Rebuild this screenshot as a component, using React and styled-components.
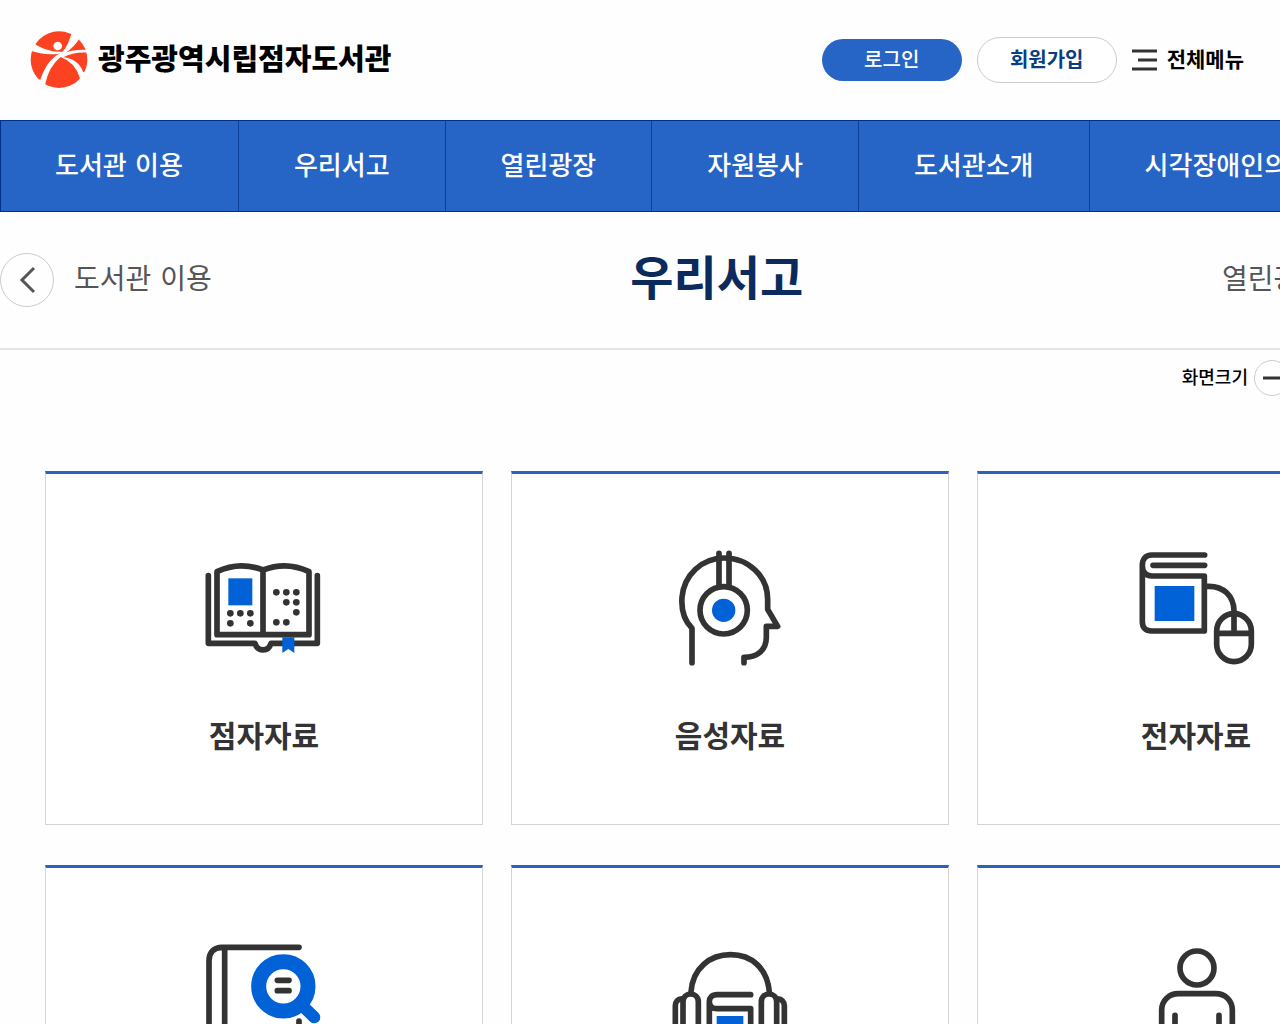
import React from "react";
import styled, { createGlobalStyle } from "styled-components";

const ink = "#333333";
const blue = "#2665c6";
const accent = "#0062d6";

const Global = createGlobalStyle`
  * { box-sizing: border-box; }
  html { overflow-x: hidden; }
  body {
    margin: 0;
    background: #fefefe;
    color: #000;
    font-family: "DejaVu Sans", "Noto Sans CJK KR", sans-serif;
  }
  a { color: inherit; text-decoration: none; }
  button { font: inherit; padding: 0; cursor: pointer; }
  h1, ul { margin: 0; padding: 0; list-style: none; }
`;

const Header = styled.header`
  display: flex;
  justify-content: space-between;
  align-items: center;
  height: 120px;
  padding: 0 36px 0 30px;
`;

const Logo = styled.a`
  display: flex;
  align-items: center;
  gap: 10px;
  font-size: 29px;
  line-height: 40px;
  font-weight: 900;
`;

const Tools = styled.div`
  display: flex;
  align-items: center;
  gap: 15px;
`;

const Pill = styled.a`
  display: flex;
  align-items: center;
  justify-content: center;
  width: 140px;
  height: ${(p) => (p.$filled ? 42 : 46)}px;
  border: ${(p) => (p.$filled ? "0" : "1px solid #cccccc")};
  border-radius: 23px;
  background: ${(p) => (p.$filled ? blue : "#fff")};
  color: ${(p) => (p.$filled ? "#fff" : "#083f82")};
  font-size: 20px;
  line-height: 28px;
  font-weight: ${(p) => (p.$filled ? 500 : 700)};
`;

const MenuButton = styled.button`
  display: flex;
  align-items: center;
  gap: 10px;
  border: 0;
  background: none;
  font-size: 21px;
  line-height: 28px;
  font-weight: 700;
`;

const Page = styled.div`
  min-width: 1434px;
`;

const Nav = styled.nav`
  background: ${blue};
  border: solid #003088;
  border-width: 1px 0;
  box-shadow: inset 1px 0 #003088;

  ul { display: flex; }
`;

const NavItem = styled.li`
  border-right: 1px solid #0b3f9a;

  &:last-child { flex: 1; border-right: 0; }

  a {
    display: block;
    padding: 0 55px;
    color: #fff;
    font-size: 26px;
    line-height: 90px;
    font-weight: 500;
    white-space: nowrap;
  }
`;

const Section = styled.div`
  display: flex;
  align-items: center;
  justify-content: space-between;
  height: 138px;
  padding-right: 35px;
  border-bottom: 2px solid #e4e4e4;
`;

const Title = styled.h1`
  padding-bottom: 2px;
  color: #0a2b5c;
  font-size: 47px;
  line-height: 68px;
  font-weight: 700;
`;

const Sibling = styled.a`
  display: flex;
  align-items: center;
  gap: 20px;
  color: #555;
  font-size: 28px;
  line-height: 40px;
`;

const Round = styled.span`
  display: flex;
  align-items: center;
  justify-content: center;
  width: 54px;
  height: 54px;
  border: 1px solid #cccccc;
  border-radius: 50%;
`;

const Zoom = styled.div`
  display: flex;
  align-items: center;
  justify-content: flex-end;
  gap: 6px;
  height: 56px;
  padding-right: 102px;
  font-size: 18px;
  line-height: 26px;
  font-weight: 500;
`;

const ZoomButton = styled.button`
  display: flex;
  align-items: center;
  justify-content: center;
  width: 36px;
  height: 36px;
  border: 1px solid #cccccc;
  border-radius: 50%;
  background: #fff;
`;

const Cards = styled.main`
  display: grid;
  grid-template-columns: repeat(3, 1fr);
  gap: 40px 28px;
  padding: 65px 19px 65px 45px;
`;

const Card = styled.a`
  display: flex;
  flex-direction: column;
  align-items: center;
  gap: 45px;
  padding: 66px 0 65px;
  border: 1px solid #d4d4d4;
  border-top: 3px solid #2b62bd;
  background: #fff;
  color: ${ink};
  font-size: 30px;
  line-height: 44px;
  font-weight: 700;
`;

const Art = ({ top = 0, children }) => (
  <svg width="150" height="130" viewBox={`-1 ${top} 450 390`} fill="none" stroke={ink}
    strokeWidth="17" strokeLinecap="round" strokeLinejoin="round" aria-hidden="true">
    {children}
  </svg>
);

const brailleDots = [
  [123, 220], [153, 220], [183, 220], [123, 250], [183, 250],
  [261, 157], [291, 157], [321, 157], [291, 187], [321, 187], [321, 217], [261, 247], [291, 247],
];

const Braille = () => (
  <Art>
    <path d="M83 284V95Q150 63 221 90Q292 63 359 95V284Z M221 90V280" />
    <path d="M57 107V310H197C205 336 237 336 245 310H384V107" />
    <rect x="117" y="115" width="72" height="81" fill={accent} stroke="none" />
    <g fill={ink} stroke="none">
      {brailleDots.map(([x, y]) => <circle key={`${x}-${y}`} cx={x} cy={y} r="10" />)}
    </g>
    <path d="M279 292H315V339L297 327L279 339Z" fill={accent} stroke="none" />
  </Art>
);

const Audio = () => (
  <Art>
    <path d="M110 368V265C82 237 78 200 80 172C86 105 140 54 206 54C280 54 337 109 337 178V208L367 259H333V292C333 332 304 352 266 352V368" />
    <circle cx="205" cy="211" r="71" />
    <path d="M191 40V136M221 40V136" />
    <circle cx="205" cy="211" r="35" fill={accent} stroke="none" />
  </Art>
);

const Digital = () => (
  <Art>
    <path d="M250 45H91C73 45 63 57 63 76C63 96 73 108 91 108H249V273H91C73 273 63 263 63 245V76" />
    <path d="M95 76H250M258 139C307 137 337 168 338 212V277M287 280H389" />
    <rect x="286" y="221" width="104" height="144" rx="52" />
    <rect x="100" y="138" width="119" height="105" fill={accent} stroke="none" />
  </Art>
);

const Search = () => (
  <Art top={12}>
    <path d="M329 52H98C73 52 59 68 59 92V350C59 376 72 388 96 388H329V273M106 54V386" />
    <circle cx="282" cy="169" r="74" stroke={accent} strokeWidth="45" fill="#fff" />
    <path d="M338 226L375 262" stroke={accent} strokeWidth="36" />
    <path d="M264 151H299M264 182H299" />
  </Art>
);

const Listening = () => (
  <Art top={12}>
    <path d="M107 186C112 114 164 74 226 74S336 114 342 186" />
    <path d="M83 340V216C83 184 129 184 129 216V340C129 366 83 366 83 340ZM318 340V216C318 184 364 184 364 216V340C364 366 318 366 318 340Z" />
    <path d="M83 207C66 205 60 217 60 227V330C60 345 70 350 83 350M364 207C380 205 387 217 387 227V330C387 345 377 350 364 350" />
    <path d="M286 194H186C170 194 162 203 162 215C162 228 170 236 186 236H286V370H186C170 370 162 362 162 350V215" />
    <rect x="184" y="258" width="80" height="80" fill={accent} stroke="none" />
  </Art>
);

const Person = () => (
  <Art top={12}>
    <circle cx="227" cy="114" r="51" />
    <path d="M121 340V240C121 211 144 191 171 191H283C311 191 333 211 333 240V340M161 256V390M293 256V390" />
  </Art>
);

const Emblem = () => (
  <svg width="58" height="58" viewBox="16 14 174 174" aria-hidden="true">
    <defs><clipPath id="disc"><circle cx="103" cy="100" r="85" /></clipPath></defs>
    <g clipPath="url(#disc)" fill="#fc4221">
      <path d="M20 46Q65 79 114 76Q130 60 144 10H20Z" />
      <path d="M166 34Q148 62 124 79Q150 68 192 71V34Z" />
      <path d="M14 72Q56 88 104 82Q66 102 47 160L14 150Z" />
      <path d="M192 79Q148 75 116 93Q160 97 176 138L192 130Z" />
      <path d="M108 92Q72 120 61 176L70 192H140L166 156Q152 108 108 92Z" />
    </g>
    <circle cx="99" cy="59" r="13" fill="#fff" />
  </svg>
);

const Chevron = ({ right }) => (
  <svg width="18" height="28" viewBox="0 0 18 28" fill="none" stroke="#555" strokeWidth="3" aria-hidden="true">
    <path d={right ? "M2 2L14 14L2 26" : "M16 2L4 14L16 26"} />
  </svg>
);

const menu = ["도서관 이용", "우리서고", "열린광장", "자원봉사", "도서관소개", "시각장애인의"];
const cards = [
  ["점자자료", Braille], ["음성자료", Audio], ["전자자료", Digital],
  ["자료검색", Search], ["소리도서", Listening], ["나의서재", Person],
];

export default function App() {
  return (
    <>
      <Global />
      <Header>
        <Logo href="#home"><Emblem />광주광역시립점자도서관</Logo>
        <Tools>
          <Pill href="#login" $filled>로그인</Pill>
          <Pill href="#join">회원가입</Pill>
          <MenuButton type="button">
            <svg width="25" height="22" viewBox="0 0 25 22" stroke={ink} strokeWidth="3" aria-hidden="true">
              <path d="M0 2H25M6 11H25M0 20H25" />
            </svg>
            전체메뉴
          </MenuButton>
        </Tools>
      </Header>
      <Page>
        <Nav>
          <ul>{menu.map((m) => <NavItem key={m}><a href="#menu">{m}</a></NavItem>)}</ul>
        </Nav>
        <Section>
          <Sibling href="#use"><Round><Chevron /></Round>도서관 이용</Sibling>
          <Title>우리서고</Title>
          <Sibling href="#plaza">열린광장<Round><Chevron right /></Round></Sibling>
        </Section>
        <Zoom>
          <span>화면크기</span>
          <ZoomButton type="button" aria-label="축소">
            <svg width="18" height="18" stroke={ink} strokeWidth="3"><path d="M0 9H18" /></svg>
          </ZoomButton>
          <ZoomButton type="button" aria-label="확대">
            <svg width="18" height="18" stroke={ink} strokeWidth="3"><path d="M0 9H18M9 0V18" /></svg>
          </ZoomButton>
        </Zoom>
        <Cards>
          {cards.map(([label, Icon]) => <Card key={label} href="#card"><Icon />{label}</Card>)}
        </Cards>
      </Page>
    </>
  );
}
